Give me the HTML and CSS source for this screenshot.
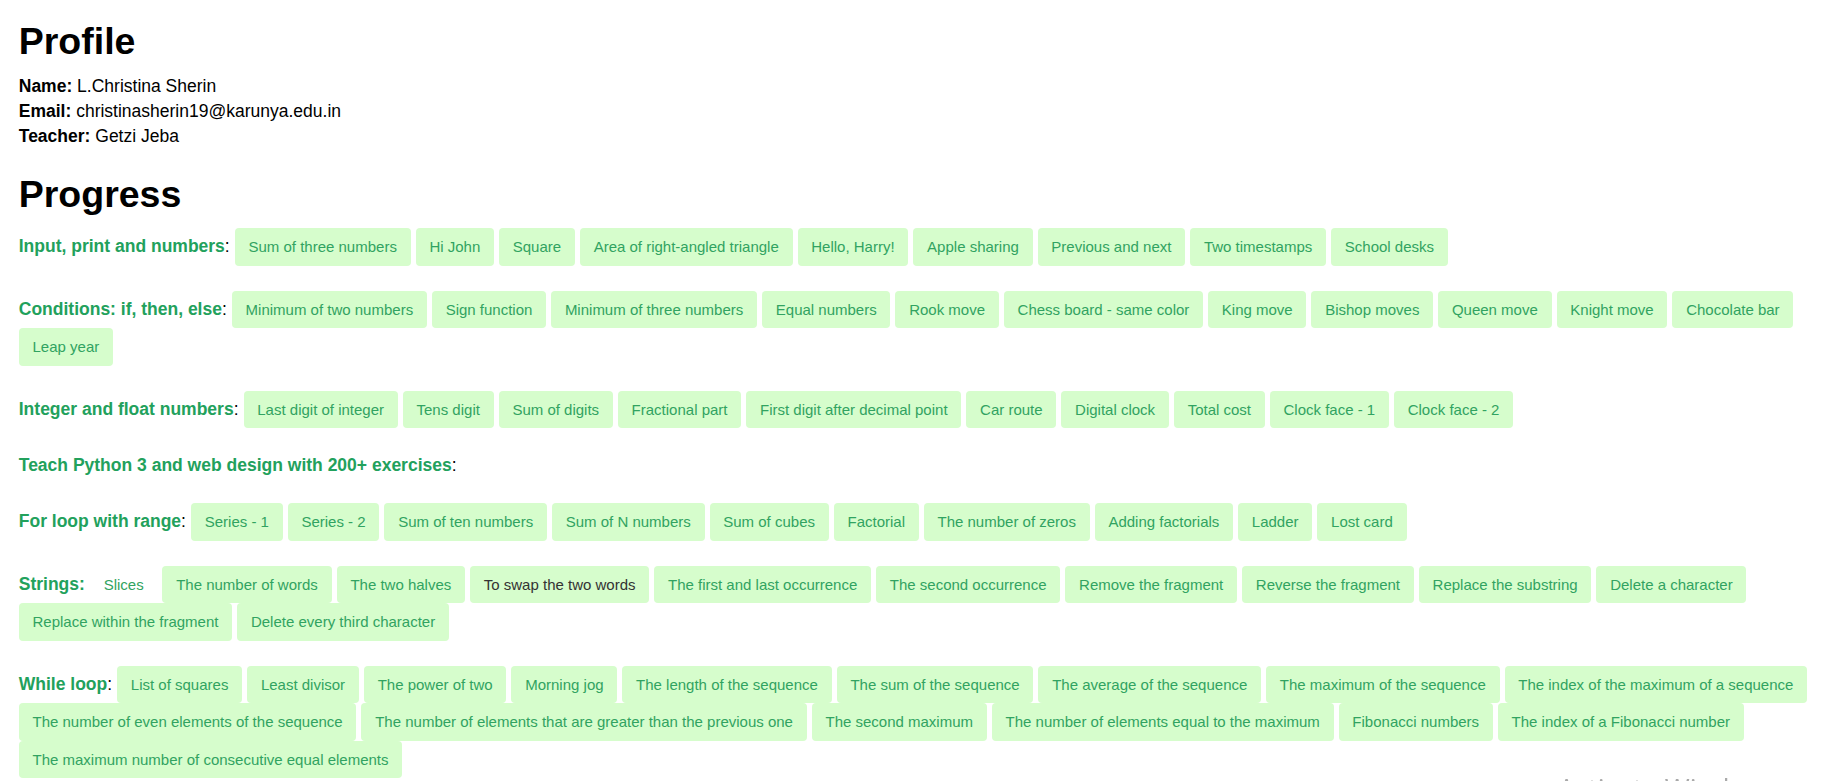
FILE: index.html
```html
<!DOCTYPE html>
<html lang="en">
<head>
<meta charset="utf-8">
<title>Profile</title>
<link rel="stylesheet" href="styles.css">
</head>
<body>
<div class="page">
  <h2 class="title first">Profile</h2>
  <div class="info"><b>Name:</b> L.Christina Sherin</div>
  <div class="info"><b>Email:</b> christinasherin19@karunya.edu.in</div>
  <div class="info"><b>Teacher:</b> Getzi Jeba</div>

  <h2 class="title">Progress</h2>

  <div class="row">
    <span class="label"><b class="topic">Input, print and numbers</b>:</span>
    <span class="chip">Sum of three numbers</span>
    <span class="chip">Hi John</span>
    <span class="chip">Square</span>
    <span class="chip">Area of right-angled triangle</span>
    <span class="chip">Hello, Harry!</span>
    <span class="chip">Apple sharing</span>
    <span class="chip">Previous and next</span>
    <span class="chip">Two timestamps</span>
    <span class="chip">School desks</span>
  </div>

  <div class="row">
    <span class="label"><b class="topic">Conditions: if, then, else</b>:</span>
    <span class="chip">Minimum of two numbers</span>
    <span class="chip">Sign function</span>
    <span class="chip">Minimum of three numbers</span>
    <span class="chip">Equal numbers</span>
    <span class="chip">Rook move</span>
    <span class="chip">Chess board - same color</span>
    <span class="chip">King move</span>
    <span class="chip">Bishop moves</span>
    <span class="chip">Queen move</span>
    <span class="chip">Knight move</span>
    <span class="chip">Chocolate bar</span>
    <span class="chip">Leap year</span>
  </div>

  <div class="row">
    <span class="label"><b class="topic">Integer and float numbers</b>:</span>
    <span class="chip">Last digit of integer</span>
    <span class="chip">Tens digit</span>
    <span class="chip">Sum of digits</span>
    <span class="chip">Fractional part</span>
    <span class="chip">First digit after decimal point</span>
    <span class="chip">Car route</span>
    <span class="chip">Digital clock</span>
    <span class="chip">Total cost</span>
    <span class="chip">Clock face - 1</span>
    <span class="chip">Clock face - 2</span>
  </div>

  <div class="row">
    <span class="label"><b class="topic">Teach Python 3 and web design with 200+ exercises</b>:</span>
  </div>

  <div class="row">
    <span class="label"><b class="topic">For loop with range</b>:</span>
    <span class="chip">Series - 1</span>
    <span class="chip">Series - 2</span>
    <span class="chip">Sum of ten numbers</span>
    <span class="chip">Sum of N numbers</span>
    <span class="chip">Sum of cubes</span>
    <span class="chip">Factorial</span>
    <span class="chip">The number of zeros</span>
    <span class="chip">Adding factorials</span>
    <span class="chip">Ladder</span>
    <span class="chip">Lost card</span>
  </div>

  <div class="row">
    <span class="label"><b class="topic">Strings:</b></span>
    <span class="chip plain">Slices</span>
    <span class="chip">The number of words</span>
    <span class="chip">The two halves</span>
    <span class="chip dark">To swap the two words</span>
    <span class="chip">The first and last occurrence</span>
    <span class="chip">The second occurrence</span>
    <span class="chip">Remove the fragment</span>
    <span class="chip">Reverse the fragment</span>
    <span class="chip">Replace the substring</span>
    <span class="chip">Delete a character</span>
    <span class="chip">Replace within the fragment</span>
    <span class="chip">Delete every third character</span>
  </div>

  <div class="row">
    <span class="label"><b class="topic">While loop</b>:</span>
    <span class="chip">List of squares</span>
    <span class="chip">Least divisor</span>
    <span class="chip">The power of two</span>
    <span class="chip">Morning jog</span>
    <span class="chip">The length of the sequence</span>
    <span class="chip">The sum of the sequence</span>
    <span class="chip">The average of the sequence</span>
    <span class="chip">The maximum of the sequence</span>
    <span class="chip">The index of the maximum of a sequence</span>
    <span class="chip">The number of even elements of the sequence</span>
    <span class="chip">The number of elements that are greater than the previous one</span>
    <span class="chip">The second maximum</span>
    <span class="chip">The number of elements equal to the maximum</span>
    <span class="chip">Fibonacci numbers</span>
    <span class="chip">The index of a Fibonacci number</span>
    <span class="chip">The maximum number of consecutive equal elements</span>
  </div>
</div>
<div class="watermark">Activate Windows</div>
</body>
</html>
```

FILE: styles.css
```css
html, body {
  margin: 0;
  padding: 0;
  overflow: hidden;
  background: #ffffff;
}

body {
  font-family: "Liberation Sans", Arial, sans-serif;
  font-size: 17.5px;
  line-height: 25px;
  color: #000000;
}

.page {
  padding: 0 18.75px;
}

.title {
  font-size: 37.5px;
  line-height: 41.25px;
  font-weight: 700;
  margin: 25px 0 12.5px;
  color: #000000;
}

.title.first {
  margin-top: 20.5px;
}

.info b {
  font-weight: 700;
}

.row {
  display: flex;
  flex-wrap: wrap;
  align-items: baseline;
  column-gap: 5px;
  row-gap: 0;
  margin-bottom: 25px;
}

.label {
  color: #000000;
  white-space: nowrap;
}

.topic {
  color: #22a15c;
  font-weight: 700;
}

.chip {
  display: inline-block;
  font-size: 15px;
  line-height: 37.5px;
  height: 37.5px;
  padding: 0 13.75px;
  background: #d6fdcc;
  color: #31a361;
  border-radius: 4px;
  white-space: nowrap;
}

.chip.plain {
  background: transparent;
}

.chip.dark {
  color: #333333;
}

.watermark {
  position: fixed;
  left: 1558px;
  top: 775px;
  font-family: "Open Sans", "Liberation Sans", sans-serif;
  font-size: 27px;
  line-height: 1;
  color: #a9a9a9;
  white-space: nowrap;
}
```
